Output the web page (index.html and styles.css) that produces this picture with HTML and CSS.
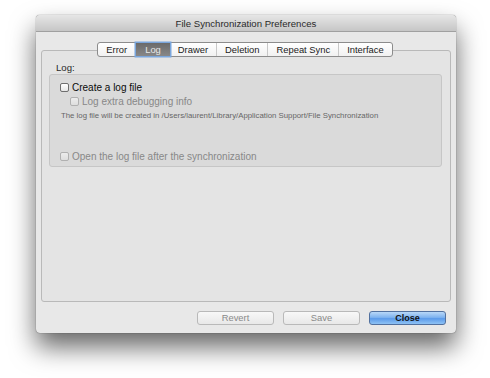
FILE: index.html
```html
<!DOCTYPE html>
<html>
<head>
<meta charset="utf-8">
<link rel="stylesheet" href="styles.css">
</head>
<body>
<div class="stage">
  <div class="window">
    <div class="titlebar">File Synchronization Preferences</div>
    <div class="content">
      <div class="tabs">
        <div class="seg">
          <span class="tab">Error</span>
          <span class="tab sel">Log</span>
          <span class="tab">Drawer</span>
          <span class="tab">Deletion</span>
          <span class="tab">Repeat Sync</span>
          <span class="tab last">Interface</span>
        </div>
      </div>
      <div class="tabbox">
        <div class="label">Log:</div>
        <div class="group">
          <div class="row"><span class="cb"></span><span class="txt">Create a log file</span></div>
          <div class="row sub"><span class="cb dis"></span><span class="txt dim">Log extra debugging info</span></div>
          <div class="note">The log file will be created in /Users/laurent/Library/Application Support/File Synchronization</div>
          <div class="row open"><span class="cb dis"></span><span class="txt dim">Open the log file after the synchronization</span></div>
        </div>
      </div>
      <div class="buttons">
        <span class="btn">Revert</span>
        <span class="btn">Save</span>
        <span class="btn def">Close</span>
      </div>
    </div>
  </div>
</div>
</body>
</html>
```
FILE: styles.css
```css
html, body {
  margin: 0;
  padding: 0;
  background: #ffffff;
}
body {
  font-family: "Liberation Sans", Arial, sans-serif;
  width: 490px;
  height: 378px;
  overflow: hidden;
}
.stage {
  padding: 15px 0 0 36px;
}
.window {
  width: 420px;
  height: 318px;
  background: #e8e8e8;
  border-radius: 4px;
  box-shadow: 0 14px 26px rgba(0,0,0,0.6), 0 0 1px rgba(0,0,0,0.7);
  display: flex;
  flex-direction: column;
  overflow: hidden;
}
.titlebar {
  height: 16px;
  line-height: 17px;
  border-bottom: 1px solid #a0a0a0;
  background: linear-gradient(#e6e6e6, #c6c6c6);
  text-align: center;
  font-size: 9.6px;
  color: #2a2a2a;
  border-radius: 4px 4px 0 0;
}
.content {
  flex: 1;
  display: flex;
  flex-direction: column;
  padding: 10px 5px 8px 5px;
}
.tabs {
  display: flex;
  justify-content: center;
  position: relative;
  z-index: 1;
  height: 15px;
  padding-right: 2px;
}
.seg {
  display: flex;
  height: 13px;
  border: 1px solid #8c8c8c;
  border-radius: 3px;
  background: linear-gradient(#ffffff, #f1f1f1);
}
.tab {
  font-size: 9.4px;
  line-height: 13px;
  padding: 0 8px;
  color: #1a1a1a;
  border-right: 1px solid #c8c8c8;
}
.tab.last { border-right: none; }
.tab.sel {
  background: linear-gradient(#6a6a6a, #888888);
  color: #e8e8e8;
  box-shadow: 0 0 0 1.5px #7aa6dc;
  border-right: none;
  position: relative;
  padding: 0 9px;
}
.tabbox {
  flex: 1;
  margin-top: -7px;
  border: 1px solid #b9b9b9;
  border-radius: 3px;
  background: #e4e4e4;
  padding: 10px 8px 0 7px;
}
.label {
  font-size: 9.6px;
  color: #2a2a2a;
  margin-left: 7px;
  height: 13px;
  line-height: 14px;
}
.group {
  box-sizing: border-box;
  height: 93px;
  border: 1px solid #c6c6c6;
  border-radius: 3px;
  background: #dadada;
  padding: 6px 0 0 10px;
}
.row {
  display: flex;
  align-items: center;
  height: 12px;
}
.row.sub {
  margin-left: 10px;
  margin-top: 2px;
}
.row.open {
  margin-top: 29px;
}
.cb {
  width: 7px;
  height: 7px;
  border: 1px solid #6e6e6e;
  border-radius: 2px;
  background: linear-gradient(#ffffff, #e6e6e6);
  margin-right: 3px;
  flex: none;
}
.cb.dis {
  border-color: #b0b0b0;
  background: linear-gradient(#ececec, #dedede);
}
.txt {
  font-size: 10px;
  color: #0a0a0a;
}
.txt.dim { color: #888888; }
.note {
  font-size: 7.8px;
  color: #666666;
  margin-top: 4px;
  margin-left: 1px;
  height: 10px;
  line-height: 10px;
}
.buttons {
  display: flex;
  justify-content: flex-end;
  gap: 9px;
  margin-top: 9px;
  padding-right: 5px;
}
.btn {
  width: 75px;
  height: 12px;
  line-height: 12px;
  border: 1px solid #b9b9b9;
  border-radius: 3px;
  background: linear-gradient(#f8f8f8, #e8e8e8);
  text-align: center;
  font-size: 9.4px;
  color: #8a8a8a;
}
.btn.def {
  border-color: #52719f;
  background: linear-gradient(#b9d8f8 0%, #7fb3ef 45%, #5c9bea 55%, #8ec2f4 100%);
  color: #111;
  font-weight: bold;
  font-size: 9px;
}
```
